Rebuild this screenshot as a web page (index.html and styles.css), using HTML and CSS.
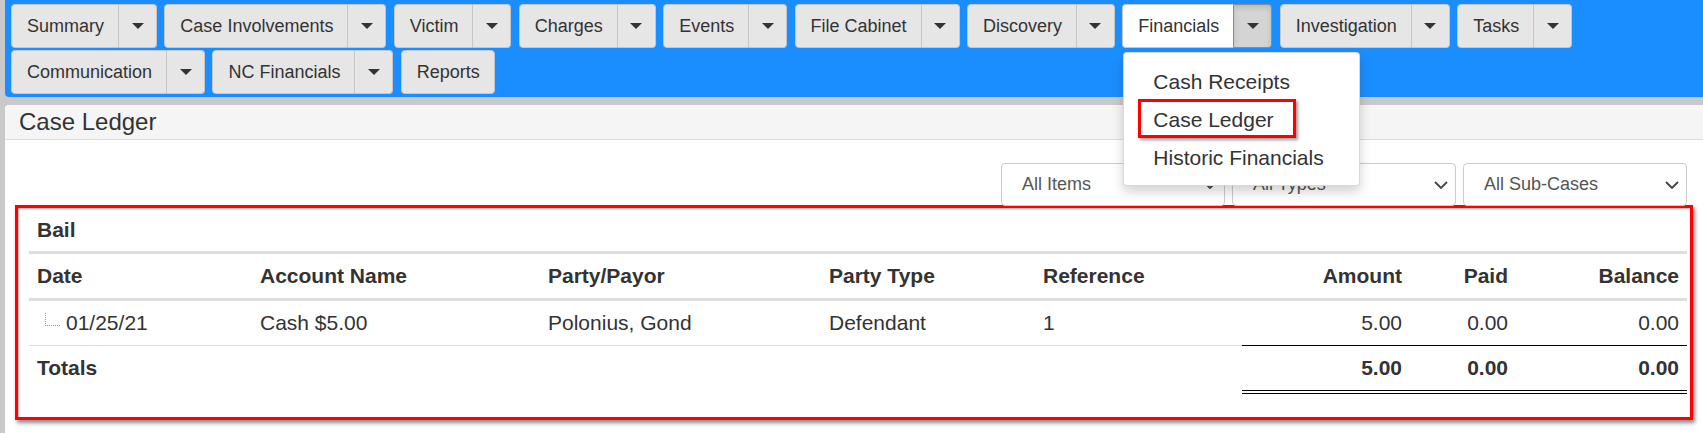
FILE: index.html
```html
<!DOCTYPE html>
<html>
<head>
<meta charset="utf-8">
<link rel="stylesheet" href="styles.css">
</head>
<body>
<div class="page">
  <nav class="tabs">
    <div class="row">
      <div class="grp"><span class="btn main">Summary</span><span class="btn drop"><i class="caret"></i></span></div>
      <div class="grp"><span class="btn main">Case Involvements</span><span class="btn drop"><i class="caret"></i></span></div>
      <div class="grp"><span class="btn main">Victim</span><span class="btn drop"><i class="caret"></i></span></div>
      <div class="grp"><span class="btn main">Charges</span><span class="btn drop"><i class="caret"></i></span></div>
      <div class="grp"><span class="btn main">Events</span><span class="btn drop"><i class="caret"></i></span></div>
      <div class="grp"><span class="btn main">File Cabinet</span><span class="btn drop"><i class="caret"></i></span></div>
      <div class="grp"><span class="btn main">Discovery</span><span class="btn drop"><i class="caret"></i></span></div>
      <div class="grp open"><span class="btn main">Financials</span><span class="btn drop"><i class="caret"></i></span>
        <ul class="menu">
          <li class="item">Cash Receipts</li>
          <li class="item"><span class="hl"></span>Case Ledger</li>
          <li class="item">Historic Financials</li>
        </ul>
      </div>
      <div class="grp"><span class="btn main">Investigation</span><span class="btn drop"><i class="caret"></i></span></div>
      <div class="grp"><span class="btn main">Tasks</span><span class="btn drop"><i class="caret"></i></span></div>
    </div>
    <div class="row">
      <div class="grp"><span class="btn main">Communication</span><span class="btn drop"><i class="caret"></i></span></div>
      <div class="grp"><span class="btn main">NC Financials</span><span class="btn drop"><i class="caret"></i></span></div>
      <div class="grp"><span class="btn solo">Reports</span></div>
    </div>
  </nav>
  <section class="panel">
    <div class="panel-head">Case Ledger</div>
    <div class="panel-body">
      <div class="filters">
        <div class="sel"><span>All Items</span><svg class="chev" width="14" height="8" viewBox="0 0 14 8"><path d="M1 1 L7 7 L13 1" fill="none" stroke="#444" stroke-width="1.8"/></svg></div>
        <div class="sel"><span>All Types</span><svg class="chev" width="14" height="8" viewBox="0 0 14 8"><path d="M1 1 L7 7 L13 1" fill="none" stroke="#444" stroke-width="1.8"/></svg></div>
        <div class="sel"><span>All Sub-Cases</span><svg class="chev" width="14" height="8" viewBox="0 0 14 8"><path d="M1 1 L7 7 L13 1" fill="none" stroke="#444" stroke-width="1.8"/></svg></div>
      </div>
      <div class="annot">
        <table class="ledger">
          <colgroup>
            <col class="c-date"><col class="c-acct"><col class="c-party"><col class="c-ptype"><col class="c-ref"><col class="c-amt"><col class="c-paid"><col class="c-bal">
          </colgroup>
          <tr class="group-row"><td colspan="8">Bail</td></tr>
          <tr class="head-row">
            <th>Date</th><th>Account Name</th><th>Party/Payor</th><th>Party Type</th><th>Reference</th>
            <th class="num">Amount</th><th class="num">Paid</th><th class="num">Balance</th>
          </tr>
          <tr class="data-row">
            <td><span class="tree"></span>01/25/21</td><td>Cash $5.00</td><td>Polonius, Gond</td><td>Defendant</td><td>1</td>
            <td class="num">5.00</td><td class="num">0.00</td><td class="num">0.00</td>
          </tr>
          <tr class="total-row">
            <td>Totals</td><td></td><td></td><td></td><td></td>
            <td class="num">5.00</td><td class="num">0.00</td><td class="num">0.00</td>
          </tr>
        </table>
      </div>
    </div>
  </section>
</div>
</body>
</html>
```

FILE: styles.css
```css
* { box-sizing: border-box; }
html, body { margin: 0; padding: 0; }
body {
  background: #c9c9c9;
  font-family: "Liberation Sans", Arial, sans-serif;
  color: #333;
}
.page {
  padding-left: 5px;
  height: 433px;
  overflow: hidden;
  display: flex;
  flex-direction: column;
  gap: 8px;
}
.tabs {
  background: #1b8eff;
  padding: 4px 0 3px 6px;
  border-bottom-left-radius: 4px;
  display: flex;
  flex-direction: column;
  gap: 2px;
}
.row { display: flex; gap: 7.35px; }
.grp { display: flex; height: 44px; position: relative; }
.btn {
  display: flex;
  align-items: center;
  background: #e6e6e6;
  border: 1px solid #c6c6c6;
  font-size: 18px;
  color: #333;
  white-space: nowrap;
}
.main { padding: 0 14px 0 15px; border-radius: 4px 0 0 4px; }
.solo { padding: 0 14px 0 15px; border-radius: 4px; }
.drop {
  width: 38px;
  justify-content: center;
  border-left: 0;
  border-radius: 0 4px 4px 0;
}
.caret {
  display: block;
  width: 0;
  height: 0;
  border-left: 6px solid transparent;
  border-right: 6px solid transparent;
  border-top: 6px solid #333;
}
.open .main { background: #fff; border-right-color: #8c8c8c; }
.open .drop {
  background: #d4d4d4;
  border-color: #8c8c8c;
  box-shadow: inset 0 3px 5px rgba(0,0,0,.125);
}
.menu {
  position: absolute;
  left: 1px;
  top: calc(100% + 4px);
  width: 237px;
  margin: 0;
  padding: 10px 0 8px;
  list-style: none;
  background: #fff;
  border: 1px solid rgba(0,0,0,.15);
  border-radius: 4px;
  box-shadow: 0 6px 12px rgba(0,0,0,.175);
  z-index: 10;
}
.item {
  position: relative;
  height: 38px;
  line-height: 38px;
  padding-left: 29px;
  font-size: 21px;
  color: #333;
  white-space: nowrap;
}
.hl {
  position: absolute;
  left: 14px;
  top: -2px;
  width: 158px;
  height: 39px;
  border: 3px solid #f00;
  box-shadow: 2px 2px 3px rgba(0,0,0,.4);
}
.panel {
  flex: 1;
  background: #fff;
  border-top-left-radius: 4px;
  display: flex;
  flex-direction: column;
}
.panel-head {
  height: 35px;
  background: #f5f5f5;
  border-bottom: 1px solid #ddd;
  border-top-left-radius: 4px;
  padding-left: 14px;
  display: flex;
  align-items: center;
  font-size: 24px;
  color: #333;
}
.panel-body { padding-top: 23px; }
.filters {
  display: flex;
  justify-content: flex-end;
  gap: 7px;
  padding-right: 16px;
}
.sel {
  width: 224px;
  height: 43px;
  border: 1px solid #ccc;
  border-radius: 4px;
  background: #fff;
  display: flex;
  align-items: center;
  justify-content: space-between;
  padding: 0 7px 0 20px;
  font-size: 18px;
  color: #555;
}
.chev { display: block; }
.annot {
  margin: -1px 10px 0 10px;
  border: 3px solid #f00;
  padding: 0 3px 23px 11px;
  box-shadow: 2px 3px 4px rgba(0,0,0,.45), inset 1px 1px 2px rgba(0,0,0,.35);
  background: #fff;
}
.ledger {
  width: 100%;
  table-layout: fixed;
  border-collapse: separate;
  border-spacing: 0;
  font-size: 21px;
  color: #333;
}
.c-date { width: 223px; }
.c-acct { width: 288px; }
.c-party { width: 281px; }
.c-ptype { width: 214px; }
.c-ref { width: 207px; }
.c-amt { width: 168px; }
.c-paid { width: 106px; }
.c-bal { width: 171px; }
.ledger td, .ledger th {
  padding: 0 8px;
  text-align: left;
  vertical-align: middle;
  white-space: nowrap;
}
.ledger .num { text-align: right; }
.group-row td {
  line-height: 43px;
  font-weight: bold;
  border-bottom: 3px solid #ddd;
}
.head-row th {
  line-height: 44px;
  font-weight: bold;
  border-bottom: 3px solid #ddd;
}
.data-row td {
  line-height: 44px;
  border-bottom: 1px solid #ddd;
}
.data-row td.num { border-bottom-color: #000; }
.total-row td {
  line-height: 44px;
  font-weight: bold;
  border-bottom: 4px solid transparent;
}
.total-row td.num { border-bottom: 4px double #000; }
.tree {
  display: inline-block;
  width: 15px;
  height: 13px;
  margin: 0 6px 0 8px;
  border-left: 1px dotted #999;
  border-bottom: 1px dotted #999;
  vertical-align: 4px;
}
```
